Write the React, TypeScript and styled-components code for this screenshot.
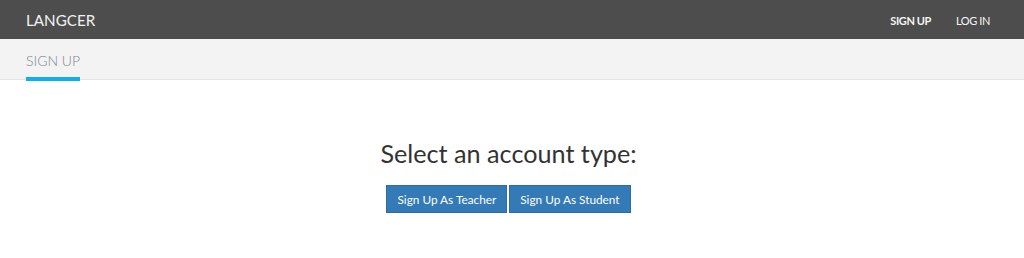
import React from "react";
import styled, { createGlobalStyle } from "styled-components";

const Global = createGlobalStyle`
  html, body { margin: 0; padding: 0; background: #fff; }
  body { font-family: Lato, "Open Sans", sans-serif; }
  * { box-sizing: border-box; }
`;

const NavBar = styled.header`
  height: 39px;
  background: #4d4d4d;
  display: flex;
  align-items: center;
  justify-content: space-between;
  padding: 0 34px 0 26px;
`;

const Brand = styled.div`
  color: #f2f2f2;
  font-size: 15.2px;
  padding-top: 1px;
`;

const NavLinks = styled.nav`
  display: flex;
  gap: 25px;
`;

const NavLink = styled.a<{ $bold?: boolean }>`
  color: #f5f5f5;
  font-size: 11px;
  letter-spacing: -0.4px;
  font-weight: ${(p) => (p.$bold ? 700 : 400)};
  text-decoration: none;
  padding-top: 1px;
`;

const SubBar = styled.div`
  height: 41px;
  background: #f3f3f3;
  border-bottom: 1px solid #e3e3e3;
  display: flex;
  align-items: flex-end;
  padding-left: 26px;
`;

const Tab = styled.div`
  color: #85858f;
  font-size: 14px;
  font-weight: 300;
  padding: 0 0 8px;
  border-bottom: 4px solid #0cb0f2;
  margin-bottom: -2px;
  line-height: 16px;
`;

const Main = styled.main`
  display: flex;
  flex-direction: column;
  align-items: center;
  padding: 58px 7px 0 0;
`;

const Heading = styled.h1`
  margin: 0;
  font-size: 25.2px;
  font-weight: 400;
  color: #333;
  line-height: 31px;
`;

const ButtonRow = styled.div`
  display: flex;
  gap: 2px;
  margin-top: 16px;
`;

const Button = styled.button`
  font-family: Lato, "Open Sans", sans-serif;
  background: #337ab7;
  color: #fff;
  border: 1px solid #2e6da4;
  font-size: 11.8px;
  height: 28px;
  padding: 0 10px;
  cursor: pointer;
`;

export default function App() {
  return (
    <>
      <Global />
      <NavBar>
        <Brand>LANGCER</Brand>
        <NavLinks>
          <NavLink $bold>SIGN UP</NavLink>
          <NavLink>LOG IN</NavLink>
        </NavLinks>
      </NavBar>
      <SubBar>
        <Tab>SIGN UP</Tab>
      </SubBar>
      <Main>
        <Heading>Select an account type:</Heading>
        <ButtonRow>
          <Button>Sign Up As Teacher</Button>
          <Button>Sign Up As Student</Button>
        </ButtonRow>
      </Main>
    </>
  );
}
